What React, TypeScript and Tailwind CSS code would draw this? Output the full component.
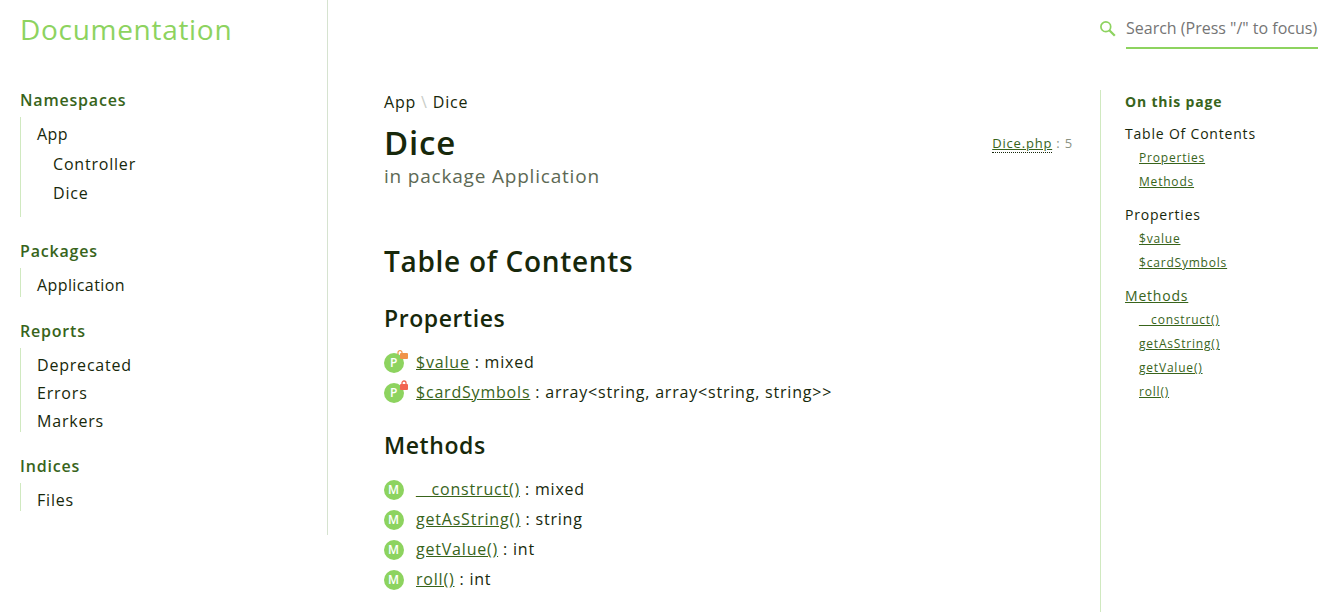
import React from "react";

type Entry = { name: string; type: string; access?: "protected" | "private" };

const properties: Entry[] = [
  { name: "$value", type: "mixed", access: "protected" },
  { name: "$cardSymbols", type: "array<string, array<string, string>>", access: "private" },
];

const methods: Entry[] = [
  { name: "__construct()", type: "mixed" },
  { name: "getAsString()", type: "string" },
  { name: "getValue()", type: "int" },
  { name: "roll()", type: "int" },
];

function SidebarSection({ title, children }: { title: string; children: React.ReactNode }) {
  return (
    <section className="mb-5 last:mb-0">
      <h2 className="mb-[3px] font-semibold leading-7 text-[#38641b]">{title}</h2>
      <div className="border-l border-[#d0e9c0] pl-4">{children}</div>
    </section>
  );
}

function SidebarLink({ children }: { children: string }) {
  return (
    <a href="#" className="block h-7 leading-[34px]">
      {children}
    </a>
  );
}

function SidebarRoot({ children }: { children: string }) {
  return (
    <h3 className="h-[29px] leading-[34px] tracking-wide">
      <a href="#">{children}</a>
    </h3>
  );
}

function LockIcon({ access }: { access: "protected" | "private" }) {
  return access === "private" ? (
    <svg className="absolute -top-[3px] left-4 h-[10px] w-2" viewBox="0 0 8 10" aria-hidden="true">
      <path d="M2 5V3a2 2 0 0 1 4 0v2" fill="none" stroke="#f26450" strokeWidth="1.3" />
      <rect x="0" y="4" width="8" height="6" rx="1" fill="#f26450" />
    </svg>
  ) : (
    <svg className="absolute -top-[3px] left-[13px] h-[9px] w-[11px]" viewBox="0 0 11 9" aria-hidden="true">
      <path d="M1 4.5V2.6a2 2 0 0 1 4 0v1.9" fill="none" stroke="#f09348" strokeWidth="1.2" />
      <rect x="3" y="3" width="8" height="6" rx="1" fill="#f09348" />
    </svg>
  );
}

function EntryList({ letter, entries }: { letter: string; entries: Entry[] }) {
  return (
    <dl>
      {entries.map((e) => (
        <div key={e.name} className="flex h-[30px] items-center gap-3">
          <dt>
            <span className="relative mt-[2px] flex size-5 items-center justify-center rounded-full bg-[#8dd35f] text-xs font-semibold text-white">
              {letter}
              {e.access && <LockIcon access={e.access} />}
            </span>
          </dt>
          <dd>
            <a href="#" className="text-[#38641b] underline">
              {e.name}
            </a>{" "}
            : {e.type}
          </dd>
        </div>
      ))}
    </dl>
  );
}

function TocGroup({ title, items, link }: { title: string; items: string[]; link?: boolean }) {
  return (
    <li className="mb-2">
      {link ? (
        <a href="#" className="block text-sm leading-[25px] text-[#38641b] underline">
          {title}
        </a>
      ) : (
        <span className="block text-sm leading-[25px]">{title}</span>
      )}
      <ul className="pl-[14px]">
        {items.map((i) => (
          <li key={i} className="text-xs leading-6">
            <a href="#" className="text-[#38641b] underline">
              {i}
            </a>
          </li>
        ))}
      </ul>
    </li>
  );
}

export default function App() {
  return (
    <div className="flex min-h-screen items-start bg-white font-['Open_Sans',sans-serif] text-base tracking-wider text-[#17280b]">
      <div className="w-[328px] shrink-0 border-r border-[#d6e3d0] pb-6 pl-5">
        <header className="h-[86px] pt-2">
          <a href="#" className="block text-[28px] leading-[42px] tracking-wide text-[#8dd35f]">
            Documentation
          </a>
        </header>
        <nav aria-label="Sidebar">
          <SidebarSection title="Namespaces">
            <SidebarRoot>App</SidebarRoot>
            <ul className="pb-[13px] pl-4">
              <li className="h-[29px] pt-px">
                <SidebarLink>Controller</SidebarLink>
              </li>
              <li className="h-[29px] pt-px">
                <SidebarLink>Dice</SidebarLink>
              </li>
            </ul>
          </SidebarSection>
          <SidebarSection title="Packages">
            <SidebarRoot>Application</SidebarRoot>
          </SidebarSection>
          <SidebarSection title="Reports">
            <SidebarLink>Deprecated</SidebarLink>
            <SidebarLink>Errors</SidebarLink>
            <SidebarLink>Markers</SidebarLink>
          </SidebarSection>
          <SidebarSection title="Indices">
            <SidebarLink>Files</SidebarLink>
          </SidebarSection>
        </nav>
      </div>

      <div className="flex min-h-screen min-w-0 flex-1 flex-col">
        <form role="search" className="flex h-[90px] items-start justify-end pt-2">
          <label htmlFor="search" className="mr-[10px] mt-[13px]">
            <span className="sr-only">Search</span>
            <svg className="size-4" viewBox="0 0 16 16" fill="none" stroke="#8dd35f" aria-hidden="true">
              <circle cx="5.8" cy="5.8" r="4.9" strokeWidth="1.7" />
              <path d="M9.3 9.3L14.8 14.8" strokeWidth="2.3" />
            </svg>
          </label>
          <input
            id="search"
            type="text"
            placeholder={'Search (Press "/" to focus)'}
            className="h-[41px] w-48 border-b-2 border-[#8dd35f] tracking-normal outline-none placeholder:text-[#757575]"
          />
        </form>

        <div className="flex flex-1">
          <main className="min-w-0 flex-1 pb-4 pl-14 pr-[27px]">
            <nav aria-label="Breadcrumb" className="leading-6">
              <a href="#">App</a> <span className="text-[#c9cdc7]">\</span> <a href="#">Dice</a>
            </nav>
            <div className="flex items-center justify-between pt-[9px]">
              <h1 className="text-[33px] font-semibold leading-10">Dice</h1>
              <p className="text-[13px] leading-4 text-[#8b9385]">
                <a href="#" className="border-b border-dotted border-[#17280b] text-[#38641b] underline">
                  Dice.php
                </a>{" "}
                : 5
              </p>
            </div>
            <p className="text-[19px] leading-[26px] text-[#5d6954]">in package Application</p>
            <h2 className="mt-[52px] text-[28px] font-semibold leading-10 tracking-wide">Table of Contents</h2>
            <h3 className="mb-[13px] mt-[21px] text-[23px] font-semibold leading-8 tracking-wide">Properties</h3>
            <EntryList letter="P" entries={properties} />
            <h3 className="mb-[13px] mt-[22px] text-[23px] font-semibold leading-8 tracking-wide">Methods</h3>
            <EntryList letter="M" entries={methods} />
          </main>

          <aside className="w-[218px] shrink-0 border-l border-[#d0e9c0] pl-6">
            <h2 className="mb-[7px] text-sm font-bold leading-6 text-[#38641b]">On this page</h2>
            <ul>
              <TocGroup title="Table Of Contents" items={["Properties", "Methods"]} />
              <TocGroup title="Properties" items={properties.map((p) => p.name)} />
              <TocGroup title="Methods" items={methods.map((m) => m.name)} link />
            </ul>
          </aside>
        </div>
      </div>
    </div>
  );
}
